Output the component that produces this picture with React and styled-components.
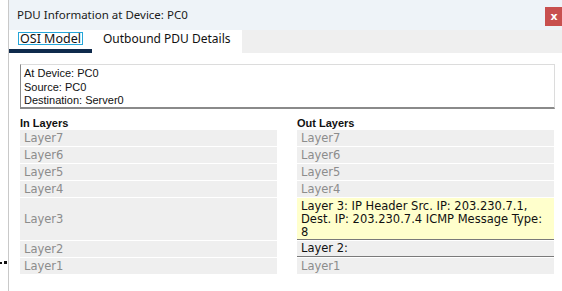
import React from "react";
import styled, { createGlobalStyle } from "styled-components";

const GlobalStyle = createGlobalStyle`
  html, body {
    margin: 0;
    padding: 0;
    background: #ffffff;
    overflow: hidden;
  }
`;

const inLayers = [
  { label: "Layer7" },
  { label: "Layer6" },
  { label: "Layer5" },
  { label: "Layer4" },
  { label: "Layer3", tall: true },
  { label: "Layer2" },
  { label: "Layer1" },
];

const outLayers = [
  { label: "Layer7" },
  { label: "Layer6" },
  { label: "Layer5" },
  { label: "Layer4" },
  {
    label:
      "Layer 3: IP Header Src. IP: 203.230.7.1, Dest. IP: 203.230.7.4 ICMP Message Type: 8",
    active: true,
    highlight: true,
    tall: true,
  },
  { label: "Layer 2:", active: true },
  { label: "Layer1" },
];

function App() {
  return (
    <>
      <GlobalStyle />
      <Page>
        <Gutter>
          <Dot $size={2} />
          <Dot $size={3} />
        </Gutter>
        <Window>
          <TitleBar>
            <Title>PDU Information at Device: PC0</Title>
            <CloseButton>x</CloseButton>
          </TitleBar>
          <TabBar>
            <Tabs>
              <Tab $selected>
                <FocusLabel>OSI Model</FocusLabel>
              </Tab>
              <Tab>Outbound PDU Details</Tab>
            </Tabs>
          </TabBar>
          <Body>
            <InfoBox>
              <InfoLine>At Device: PC0</InfoLine>
              <InfoLine>Source: PC0</InfoLine>
              <InfoLine>Destination: Server0</InfoLine>
            </InfoBox>
            <Columns>
              <Column>
                <Heading>In Layers</Heading>
                <LayerList>
                  {inLayers.map((layer) => (
                    <LayerRow key={layer.label} $tall={layer.tall}>
                      {layer.label}
                    </LayerRow>
                  ))}
                </LayerList>
              </Column>
              <Column>
                <Heading>Out Layers</Heading>
                <LayerList>
                  {outLayers.map((layer) => (
                    <LayerRow
                      key={layer.label}
                      $tall={layer.tall}
                      $active={layer.active}
                      $highlight={layer.highlight}
                    >
                      {layer.label}
                    </LayerRow>
                  ))}
                </LayerList>
              </Column>
            </Columns>
          </Body>
        </Window>
      </Page>
    </>
  );
}

const Page = styled.div`
  display: flex;
  width: 562px;
  height: 291px;
  overflow: hidden;
`;

const Gutter = styled.div`
  width: 8px;
  flex: none;
  display: flex;
  align-items: flex-end;
  gap: 2px;
  padding-top: 261px;
  box-sizing: border-box;
  height: 264px;
`;

const Dot = styled.span`
  display: block;
  width: ${(p) => p.$size}px;
  height: ${(p) => p.$size}px;
  background: #111;
`;

const Window = styled.div`
  width: 554px;
  flex: none;
  border-left: 1px solid #c9c9c9;
  background: #fff;
  display: flex;
  flex-direction: column;
  height: 300px;
`;

const TitleBar = styled.div`
  height: 30px;
  background: #eef3f8;
  display: flex;
  align-items: flex-start;
  justify-content: space-between;
`;

const Title = styled.div`
  font-family: "Noto Sans", sans-serif;
  font-size: 11.5px;
  color: #1a1a1a;
  padding: 7px 0 0 8px;
`;

const CloseButton = styled.div`
  margin-top: 7px;
  width: 18px;
  height: 19px;
  background: #c8504f;
  color: #fff;
  font-family: "DejaVu Sans", sans-serif;
  font-weight: bold;
  font-size: 11px;
  display: flex;
  align-items: center;
  justify-content: center;
  line-height: 1;
`;

const TabBar = styled.div`
  height: 23px;
  background: #efefef;
  display: flex;
`;

const Tabs = styled.div`
  display: flex;
  background: #fff;
  width: 233px;
`;

const Tab = styled.div`
  font-family: "Noto Sans", sans-serif;
  font-size: ${(p) => (p.$selected ? "12.5px" : "12px")};
  color: #111;
  height: 23px;
  box-sizing: border-box;
  display: flex;
  align-items: center;
  padding: ${(p) => (p.$selected ? "0 8px 2px 10px" : "0 0 2px 11px")};
  border-bottom: 4px solid ${(p) => (p.$selected ? "#0f2a4c" : "transparent")};
  width: ${(p) => (p.$selected ? "83px" : "auto")};
`;

const FocusLabel = styled.span`
  outline: 1px solid #25a6d9;
  line-height: 11px;
  padding: 0 1px;
  white-space: nowrap;
`;

const Body = styled.div`
  padding: 11px 8px 0 11px;
  display: flex;
  flex-direction: column;
`;

const InfoBox = styled.div`
  height: 45px;
  box-sizing: border-box;
  border: 1px solid #dcdcdc;
  border-left-color: #8a8a8a;
  border-bottom: 2px solid #8a8a8a;
  padding: 2px 3px;
  font-family: "Liberation Sans", Arial, sans-serif;
  font-size: 11px;
  color: #111;
`;

const InfoLine = styled.div`
  line-height: 13.5px;
`;

const Columns = styled.div`
  display: grid;
  grid-template-columns: 257px 257px;
  column-gap: 20px;
  margin-top: 7px;
`;

const Column = styled.div`
  display: flex;
  flex-direction: column;
`;

const Heading = styled.div`
  font-family: "Liberation Sans", Arial, sans-serif;
  font-weight: bold;
  font-size: 11px;
  color: #111;
  height: 14px;
  line-height: 14px;
`;

const LayerList = styled.div`
  display: flex;
  flex-direction: column;
  gap: 1px;
`;

const LayerRow = styled.div`
  font-family: "DejaVu Sans", Verdana, sans-serif;
  font-size: 11.5px;
  line-height: 13px;
  box-sizing: border-box;
  height: ${(p) => (p.$tall ? "42px" : "16px")};
  display: flex;
  align-items: center;
  padding: ${(p) => (p.$highlight ? "1px 4px 0" : "0 4px")};
  background: ${(p) => (p.$highlight ? "#ffffcc" : "#efefef")};
  color: ${(p) => (p.$active ? "#111" : "#8c8c8c")};
  border-bottom: ${(p) => (p.$active ? "1px solid #7a7a7a" : "none")};
`;

export default App;
